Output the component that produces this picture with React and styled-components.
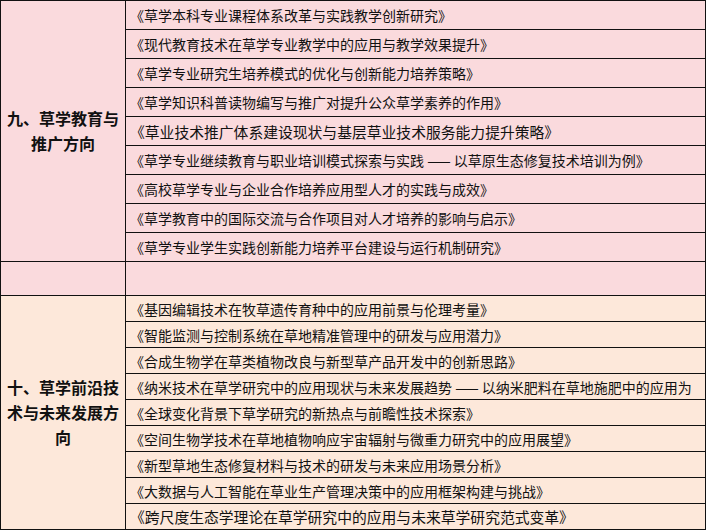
import React from 'react';
import styled, { createGlobalStyle } from 'styled-components';

const GlobalStyle = createGlobalStyle`
  html, body { margin: 0; padding: 0; background: #ffffff; }
  body {
    font-family: "Noto Sans CJK SC", "Noto Sans", sans-serif;
    color: #111111;
  }
`;

const Table = styled.div`
  width: 706px;
  height: 530px;
  box-sizing: border-box;
  border: 1px solid #111111;
  display: flex;
  flex-direction: column;
  overflow: hidden;
`;

const Section = styled.div`
  display: flex;
  background: ${(p) => p.$bg};
  & + & {
    border-top: 1px solid #111111;
  }
`;

const HeaderCell = styled.div`
  width: 125px;
  flex-shrink: 0;
  box-sizing: border-box;
  border-right: 1px solid #111111;
  padding: 0 4px;
  display: flex;
  align-items: center;
  justify-content: center;
  text-align: center;
  font-size: 16px;
  font-weight: 700;
  line-height: 25px;
`;

const List = styled.div`
  flex: 1;
  min-width: 0;
  display: flex;
  flex-direction: column;
`;

const Row = styled.div`
  height: ${(p) => p.$h}px;
  display: flex;
  align-items: center;
  padding-left: 4px;
  white-space: nowrap;
  overflow: hidden;
  font-size: ${(p) => p.$size || 14}px;
  & + & {
    border-top: 1px solid #111111;
  }
`;

const sections = [
  {
    title: '九、草学教育与推广方向',
    bg: '#fadadd',
    h: 28,
    items: [
      { t: '《草学本科专业课程体系改革与实践教学创新研究》' },
      { t: '《现代教育技术在草学专业教学中的应用与教学效果提升》' },
      { t: '《草学专业研究生培养模式的优化与创新能力培养策略》' },
      { t: '《草学知识科普读物编写与推广对提升公众草学素养的作用》' },
      { t: '《草业技术推广体系建设现状与基层草业技术服务能力提升策略》', size: 14.8 },
      { t: '《草学专业继续教育与职业培训模式探索与实践 —— 以草原生态修复技术培训为例》' },
      { t: '《高校草学专业与企业合作培养应用型人才的实践与成效》' },
      { t: '《草学教育中的国际交流与合作项目对人才培养的影响与启示》' },
      { t: '《草学专业学生实践创新能力培养平台建设与运行机制研究》' },
    ],
  },
  {
    title: '',
    bg: '#fadadd',
    h: 33,
    items: [{ t: '' }],
  },
  {
    title: '十、草学前沿技术与未来发展方向',
    bg: '#fde8da',
    h: 25,
    items: [
      { t: '《基因编辑技术在牧草遗传育种中的应用前景与伦理考量》' },
      { t: '《智能监测与控制系统在草地精准管理中的研发与应用潜力》' },
      { t: '《合成生物学在草类植物改良与新型草产品开发中的创新思路》' },
      { t: '《纳米技术在草学研究中的应用现状与未来发展趋势 —— 以纳米肥料在草地施肥中的应用为' },
      { t: '《全球变化背景下草学研究的新热点与前瞻性技术探索》' },
      { t: '《空间生物学技术在草地植物响应宇宙辐射与微重力研究中的应用展望》' },
      { t: '《新型草地生态修复材料与技术的研发与未来应用场景分析》' },
      { t: '《大数据与人工智能在草业生产管理决策中的应用框架构建与挑战》' },
      { t: '《跨尺度生态学理论在草学研究中的应用与未来草学研究范式变革》', size: 14.8 },
    ],
  },
];

export default function App() {
  return (
    <>
      <GlobalStyle />
      <Table>
        {sections.map((s, i) => (
          <Section key={i} $bg={s.bg}>
            <HeaderCell>{s.title}</HeaderCell>
            <List>
              {s.items.map((item, j) => (
                <Row key={j} $h={s.h} $size={item.size}>
                  {item.t}
                </Row>
              ))}
            </List>
          </Section>
        ))}
      </Table>
    </>
  );
}
